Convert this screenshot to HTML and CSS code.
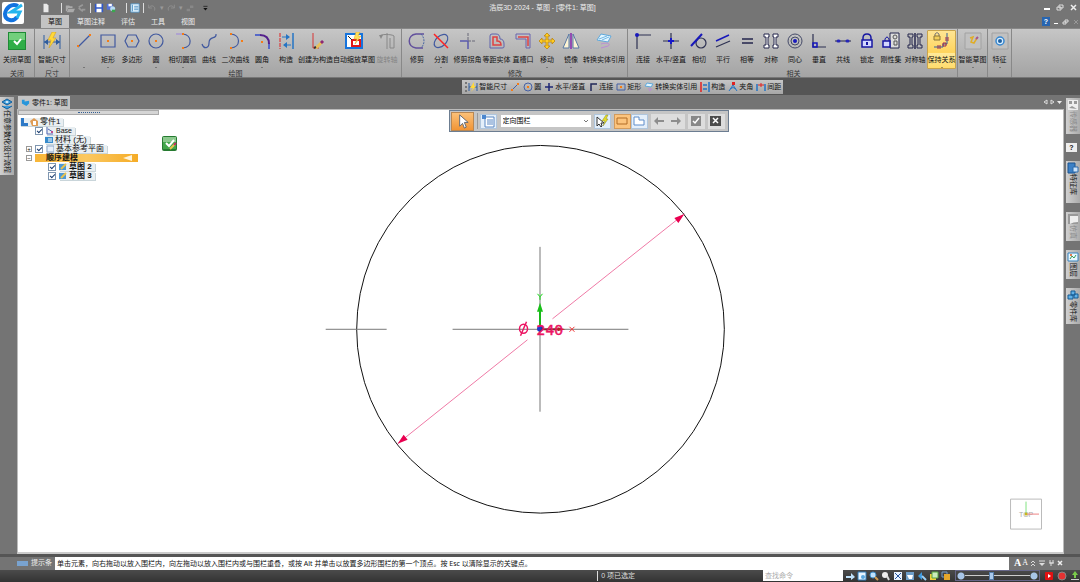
FILE: index.html
```html
<!DOCTYPE html>
<html lang="zh-CN">
<head>
  <meta charset="UTF-8" />
  <meta name="viewport" content="width=device-width, initial-scale=1.0"/>
  <title>浩辰3D 2024 - 草图 - [零件1: 草图]</title>
  <link rel="stylesheet" href="styles.css">
</head>
<body>

  <header class="header">
    <button class="logo" aria-label="应用程序菜单">
      <svg viewBox="0 0 22 22"><path d="M16 4C10 1 4 5 3 12c0 7 9 8 12 3" fill="none" stroke="#1273e0" stroke-width="4"/><path d="M20 3 9 10h9l-3 6" fill="none" stroke="#23b4ee" stroke-width="3"/></svg>
    </button>
    <div class="titlebar">
      <div class="quick">
        <button aria-label="新建"><svg viewBox="0 0 12 12"><path d="M3 1h4l2 2v8H3z" fill="#e8e8e8"/></svg></button>
        <span class="tiny"></span><i class="bar"></i>
        <button aria-label="打开"><svg viewBox="0 0 12 12"><path d="M1 3h4l1 1h3v2H4l-2 4H1zM4 7h8l-2 4H2z" fill="#aaa"/></svg></button>
        <button aria-label="关闭文件"><svg viewBox="0 0 12 12"><path d="M2 5 7 2M2 6l5 4M6 8h4" stroke="#999" stroke-width="2"/></svg></button>
        <i class="bar"></i>
        <button aria-label="保存"><svg viewBox="0 0 12 12"><path d="M1 1h10v10H1z" fill="#3158c8"/><path d="M3 1h6v4H3zM3 7h6v4H3z" fill="#fff"/></svg></button>
        <button aria-label="全部保存"><svg viewBox="0 0 12 12"><path d="M1 1h7v7H1z" fill="#5573d8"/><path d="M3 1h4v3H3z" fill="#fff"/><circle cx="8" cy="7" r="3" fill="#b9dcf5"/><path d="M7 8h4v3H7z" fill="#3aa84e"/></svg></button>
        <span class="tiny"></span><i class="bar"></i>
        <button aria-label="属性"><svg viewBox="0 0 12 12"><path d="M1 1h10v10H1z" fill="#e4f3fc" stroke="#4e91c4"/><path d="M3 2v8M5 4h5M5 6h5M5 8h5" stroke="#4e91c4"/></svg></button>
        <i class="bar"></i>
        <button aria-label="撤销"><svg viewBox="0 0 12 12"><path d="M2 2v4h4M2 6c3-5 9-2 7 3" fill="none" stroke="#929292"/></svg></button>
        <span class="tiny">▾</span>
        <button aria-label="重做"><svg viewBox="0 0 12 12"><path d="M10 2v4H6M10 6C7 1 1 4 3 9" fill="none" stroke="#929292"/></svg></button>
        <span class="tiny">▾</span>
        <button aria-label="重复"><svg viewBox="0 0 12 12"><path d="M2 7h4v3H2zM6 3h4v3H6z" fill="#888"/></svg></button>
        <button aria-label="自定义快速访问" class="more"><svg viewBox="0 0 12 12"><path d="M4 4h5" stroke="#222"/><path d="M4 6h5L6.500 9z" fill="#111"/></svg></button>
      </div>
      <h1 class="caption">浩辰3D 2024 - 草图 - [零件1: 草图]</h1>
      <div class="winbtns">
        <button aria-label="最小化"><svg viewBox="0 0 8 8"><path d="M1 4h6v2H1z"/></svg></button>
        <button aria-label="还原"><svg viewBox="0 0 8 8"><path d="M3 1h4v3H3zM1 3h4v3H1z" fill="#757575" stroke="#ddd"/></svg></button>
        <button aria-label="关闭"><svg viewBox="0 0 8 8"><path d="m2 1 5 5m0-5L2 6" stroke="#eee" stroke-width="1.500"/></svg></button>
      </div>
    </div>
    <nav class="tabs">
      <a href="#" class="tab active">草图</a>
      <a href="#" class="tab">草图注释</a>
      <a href="#" class="tab">评估</a>
      <a href="#" class="tab">工具</a>
      <a href="#" class="tab">视图</a>
      <div class="docbtns">
        <button class="help" aria-label="帮助">?</button>
        <button aria-label="最小化文档"><svg viewBox="0 0 8 8"><path d="M2 5h4v1H2z"/></svg></button>
        <button aria-label="还原文档"><svg viewBox="0 0 8 8"><path d="M3 2h3v2H3zM1 4h3v2H1z" fill="#757575" stroke="#ddd"/></svg></button>
        <button aria-label="关闭文档"><svg viewBox="0 0 8 8"><path d="m2 2 4 4m0-4L2 6" stroke="#999"/></svg></button>
      </div>
    </nav>
  </header>

  <section class="ribbon">
    <div class="group g-one">
      <div class="cmds">
        <button class="cmd w4"><svg viewBox="0 0 18 18"><path d="M0 0h18v18H0z" fill="#1f8a35"/><path d="M1 1h16v16H1z" fill="#2fae47"/><path d="M1 1h16v7H1z" fill="#72cf7c"/><path d="m6 9 3 3 4-5" fill="none" stroke="#fff" stroke-width="2"/></svg><span>关闭草图</span></button>
      </div>
      <div class="gname">关闭</div>
    </div>
    <div class="group g-one">
      <div class="cmds">
        <button class="cmd w4 drop"><svg viewBox="0 0 18 18"><path d="M1 3v14M17 3v14M1 10h16" stroke="#2e5c9e"/><path d="m1 10 4-3v6zM17 10l-4-3v6z" fill="#2e5c9e"/><path d="m9 0-4 8h3l-2 8 7-10h-3l3-6z" fill="#ffd83a" stroke="#cf9b15" stroke-width=".5"/></svg><span>智能尺寸</span></button>
      </div>
      <div class="gname">尺寸</div>
    </div>
    <div class="group">
      <div class="cmds">
        <button class="cmd drop" aria-label="直线"><svg viewBox="0 0 18 18"><path d="M3 15 15 3" class="bl"/><path class="or" d="M2 13h2v2H2zM14 2h2v2h-2z"/></svg><span></span></button>
        <button class="cmd drop"><svg viewBox="0 0 18 18"><path d="M2 3h14v12H2z" class="bl"/><path class="or" d="M8 8h2v2H8z"/></svg><span>矩形</span></button>
        <button class="cmd"><svg viewBox="0 0 18 18"><path d="M5 3h8l3 6-3 6H5L2 9z" class="bl"/><path class="or" d="M8 8h2v2H8z"/></svg><span>多边形</span></button>
        <button class="cmd drop"><svg viewBox="0 0 18 18"><circle cx="9" cy="9" r="7" class="bl"/><path class="or" d="M8 8h2v2H8z"/></svg><span>圆</span></button>
        <button class="cmd w4 drop"><svg viewBox="0 0 18 18"><path d="M2 2h7" stroke="#9b83dc"/><path d="M9 2c9 1 10 13 0 14" class="bl"/><path class="or" d="M8 1h2v2H8zM8 15h2v2H8z"/></svg><span>相切圆弧</span></button>
        <button class="cmd"><svg viewBox="0 0 18 18"><path d="M2 12c2 6 7 4 7-1 0-8 8-3 7-9" class="bl"/></svg><span>曲线</span></button>
        <button class="cmd w4"><svg viewBox="0 0 18 18"><path d="M4 2c10 1 10 13 0 14" class="bl"/><path class="or" d="M3 1h2v2H3zM3 15h2v2H3zM14 8h2v2h-2z"/></svg><span>二次曲线</span></button>
        <button class="cmd drop"><svg viewBox="0 0 18 18"><path d="M2 3h5M16 11v6" stroke="#5669c8" stroke-width="2"/><path d="M7 3q9 0 9 9" fill="none" stroke="#54208c" stroke-width="2"/><path class="or" d="M8 9h2v2H8z"/></svg><span>圆角</span></button>
        <button class="cmd"><svg viewBox="0 0 18 18"><path d="M3 1v16" stroke="#e02222" stroke-dasharray="4 1"/><path d="M16 1v16" stroke="#2474c4" stroke-width="1.500"/><path d="M5 5h4M10 13h4" stroke="#2474c4"/><path d="m9 2 4 3-4 3zM10 10l-4 3 4 3z" fill="#2474c4"/></svg><span>构造</span></button>
        <button class="cmd w5"><svg viewBox="0 0 18 18"><path d="M6 1v15h6" fill="none" stroke="#d83434"/><path d="m8 15 6-6 2 2-6 6H8z" fill="#e8c15a"/><path d="m14 9 2 2" stroke="#8d2775" stroke-width="3"/><path d="m7 16 2-1" stroke="#333" stroke-width="2"/></svg><span>创建为构造</span></button>
        <button class="cmd w6"><svg viewBox="0 0 18 18"><path d="M1 2h16v14H1z" fill="#fff" stroke="#1673dc" stroke-width="2"/><path d="M7 8h8v6H7z" fill="none" stroke="#e21818" stroke-width="2"/><path d="m3 4 4 4" stroke="#222"/><path d="m11 0-2 7h3l-2 5 6-8h-3l2-4z" fill="#ffe05a" stroke="#d8a528" stroke-width=".5"/></svg><span>自动缩放草图</span></button>
        <button class="cmd dim" disabled><svg viewBox="0 0 18 18"><path d="M9 1v16M2 4c0-2 12-2 14 0v12h-4V6" fill="none" stroke="#888"/><path d="M1 3h4L3 7z" fill="#888"/></svg><span>旋转轴</span></button>
      </div>
      <div class="gname">绘图</div>
    </div>
    <div class="group g-edit">
      <div class="cmds">
        <button class="cmd"><svg viewBox="0 0 18 18"><path d="M16 2H8C-1 3-1 15 8 16h7" fill="none" stroke="#62509c" stroke-width="1.500"/><path d="M13 2c4 4 4 10 0 14" fill="none" stroke="#4b68a4" stroke-dasharray="2 1"/></svg><span>修剪</span></button>
        <button class="cmd drop"><svg viewBox="0 0 18 18"><ellipse cx="9" cy="9" rx="5" ry="8" transform="rotate(48 9 9)" class="bl"/><path d="m2 2 14 14" stroke="#f22" stroke-width="1.500"/></svg><span>分割</span></button>
        <button class="cmd w4"><svg viewBox="0 0 18 18"><path d="M1 9h8v8" fill="none" stroke="#5959ad" stroke-width="1.500"/><path d="M9 1v8h8" fill="none" stroke="#686878" stroke-dasharray="3 1"/></svg><span>修剪拐角</span></button>
        <button class="cmd w4"><svg viewBox="0 0 18 18"><path d="M2 4q0-2 2-2h4q4 0 4 5 4 0 4 5v3q0 1-2 1H2z" fill="none" stroke="#5e63ad"/><path d="M5 5h4v4q4 0 4 4H5z" fill="none" stroke="#df4141" stroke-width="1.500"/></svg><span>等距实体</span></button>
        <button class="cmd"><svg viewBox="0 0 18 18"><path d="M2 2h14v14h-4V7H2z" fill="none" stroke="#6965af"/><path d="M4 5h10v9" fill="none" stroke="#df4141" stroke-width="1.500"/></svg><span>直槽口</span></button>
        <button class="cmd drop"><svg viewBox="0 0 18 18"><path d="m9 1 3 3h-2v4h4V6l3 3-3 3v-2h-4v4h2l-3 3-3-3h2v-4H4v2L1 9l3-3v2h4V4H6z" fill="#ffcd22" stroke="#bd8710" stroke-width=".8"/></svg><span>移动</span></button>
        <button class="cmd drop"><svg viewBox="0 0 18 18"><path d="M7 2v14H1zM11 2v14h6z" fill="#fff5d4" stroke="#5979a6"/><path d="M9 1v16" stroke="#954db1" stroke-width="2"/></svg><span>镜像</span></button>
        <button class="cmd w6"><svg viewBox="0 0 18 18"><path d="m6 2 10 2-3 6-11-2z" fill="#e2f5ff" stroke="#5fa8db"/><path d="m4 7 8-3M7 8l7-3" stroke="#72b7e4"/><path d="M6 12c5-2 11 0 7 2l-7 2" fill="none" stroke="#bb8bd4"/></svg><span>转换实体引用</span></button>
      </div>
      <div class="gname">修改</div>
    </div>
    <div class="group related">
      <div class="cmds">
        <button class="cmd"><svg viewBox="0 0 18 18"><path d="M3 17V3h14" class="dk"/><circle cx="3" cy="3" r="2" fill="#1919bd"/></svg><span>连接</span></button>
        <button class="cmd w5"><svg viewBox="0 0 18 18"><path d="M9 1v16M1 9h16" class="dk"/><path d="M9 6v6M6 9h6" stroke="#1717ca" stroke-width="2"/></svg><span>水平/竖直</span></button>
        <button class="cmd"><svg viewBox="0 0 18 18"><circle cx="11" cy="11" r="5" class="dk"/><path d="M1 14 12 2" stroke="#1717ba" stroke-width="2"/></svg><span>相切</span></button>
        <button class="cmd"><svg viewBox="0 0 18 18"><path d="m2 9 13-6" stroke="#1717ba" stroke-width="1.500"/><path d="m2 15 14-6" class="dk"/></svg><span>平行</span></button>
        <button class="cmd"><svg viewBox="0 0 18 18"><path d="M4 7h11M4 11h11" stroke="#24264d" stroke-width="1.500"/></svg><span>相等</span></button>
        <button class="cmd"><svg viewBox="0 0 18 18"><path d="M2 2h5v3H6v8h1v3H2v-3h2V5H2zM16 2h-5v3h1v8h-1v3h5v-3h-2V5h2z" fill="#fff" stroke="#24264d"/></svg><span>对称</span></button>
        <button class="cmd"><svg viewBox="0 0 18 18"><circle cx="9" cy="9" r="7" fill="none" stroke="#444a68"/><circle cx="9" cy="9" r="4" fill="none" stroke="#444a68"/><circle cx="9" cy="9" r="2" fill="#1919bd"/></svg><span>同心</span></button>
        <button class="cmd"><svg viewBox="0 0 18 18"><path d="M3 2v13h13" class="dk"/><path d="M3 11h4v4H3z" fill="none" stroke="#1717ba" stroke-width="1.500"/></svg><span>垂直</span></button>
        <button class="cmd"><svg viewBox="0 0 18 18"><path d="M1 9h16" stroke="#24264d"/><path d="M4 9h1M13 9h1" stroke="#2626b8" stroke-width="3" stroke-linecap="round"/></svg><span>共线</span></button>
        <button class="cmd"><svg viewBox="0 0 18 18"><path d="M5 8V6q0-4 4-4t4 4v2" fill="none" stroke="#1717a2" stroke-width="1.500"/><path d="M4 8h10v7H4z" fill="#d4d8ff" stroke="#1717a2" stroke-width="1.500"/><path d="M9 10v3" stroke="#1717a2" stroke-width="2"/></svg><span>锁定</span></button>
        <button class="cmd"><svg viewBox="0 0 18 18"><path d="M8 1h9v15H8z" fill="#ddd" stroke="#24264d"/><circle cx="13" cy="5" r="2" fill="none" stroke="#555"/><path d="M12 9h3v4h-3z" fill="none" stroke="#555"/><path d="M3 9V7q2-4 4 0v2" fill="none" stroke="#1717a2"/><path d="M1 9h7v6H1z" fill="#d4d8ff" stroke="#1717a2" stroke-width="1.500"/></svg><span>刚性集</span></button>
        <button class="cmd"><svg viewBox="0 0 18 18"><path d="M2 2h5v3H6v8h1v3H2v-3h2V5H2zM16 2h-5v3h1v8h-1v3h5v-3h-2V5h2z" fill="#bbb" stroke="#24264d"/><path d="M9 1v16" stroke="#24264d" stroke-width="1.500"/></svg><span>对称轴</span></button>
        <button class="cmd w4 drop on"><svg viewBox="0 0 18 18"><path d="M2 5V2q2-3 4 0v3" fill="none" stroke="#777"/><path d="M1 4h6v4H1z" fill="#f3cf5a" stroke="#8b7638"/><path d="M1 15h9v-3h4V1" fill="none" stroke="#31609d"/><path d="M5 13v4M7 13v4M12 6h4M12 8h4" stroke="#9c2850"/><path d="M10 11h3v3h-3z" fill="none" stroke="#9c2850"/></svg><span>保持关系</span></button>
      </div>
      <div class="gname">相关</div>
    </div>
    <div class="group g-box">
      <div class="cmds">
        <button class="cmd w4 drop"><svg viewBox="0 0 18 18"><path d="M1 1h16v16H1z" fill="#c1c1c1" stroke="#a2a2a2"/><path d="m6 6 3-1-2 5 3 1 3-5" fill="none" stroke="#e0ad26" stroke-width="1.500"/><path d="m12 7 2-2" stroke="#a6568c" stroke-width="2"/></svg><span>智能草图</span></button>
      </div>
    </div>
    <div class="group g-box g-feature">
      <div class="cmds">
        <button class="cmd drop"><svg viewBox="0 0 18 18"><path d="M1 1h16v16H1z" fill="#c1c1c1" stroke="#a2a2a2"/><circle cx="9" cy="9" r="4" fill="#d9efff" stroke="#3787cf" stroke-width="1.500"/><circle cx="9" cy="9" r="2" fill="#2161a2"/></svg><span>特征</span></button>
      </div>
    </div>
  </section>

  <div class="band">
    <div class="toolstrip">
      <i class="grip"></i>
      <button><svg viewBox="0 0 10 10"><path d="M1 1v8M9 1v8M1 5h8" stroke="#2e5c9e"/><path d="m6 0-4 6h3L3 10l5-6H6z" fill="#ffd83a"/></svg>智能尺寸</button>
      <button aria-label="直线"><svg viewBox="0 0 10 10"><path d="m2 8 6-6" stroke="#4560a5"/><path class="or" d="M1 7h2v2H1zM7 1h2v2H7z"/></svg></button>
      <button><svg viewBox="0 0 10 10"><circle cx="5" cy="5" r="4" fill="none" stroke="#4560a5"/><path class="or" d="M4 4h2v2H4z"/></svg>圆</button>
      <button><svg viewBox="0 0 10 10"><path d="M5 1v8M1 5h8" stroke="#1e2775" stroke-width="1.500"/></svg>水平/竖直</button>
      <button><svg viewBox="0 0 10 10"><path d="M3 9V2h6" fill="none" stroke="#222959" stroke-width="1.500"/></svg>连接</button>
      <button><svg viewBox="0 0 10 10"><path d="M1 2h8v6H1z" fill="none" stroke="#4560a5"/><path class="or" d="M4 4h2v2H4z"/></svg>矩形</button>
      <button><svg viewBox="0 0 10 10"><path d="m3 1 6 1-2 3-6-1z" fill="#e2f5ff" stroke="#5fa8db"/><path d="M4 7q7-1 1 2" fill="none" stroke="#bb8bd4"/></svg>转换实体引用</button>
      <button><svg viewBox="0 0 10 10"><path d="M1 0v10" stroke="#e02222" stroke-width="1.500"/><path d="M9 0v10M3 3h4M3 7h4" stroke="#2474c4" stroke-width="1.500"/></svg>构造</button>
      <button><svg viewBox="0 0 10 10"><path d="M5 3 1 9M5 3l4 6M2 7q3-3 6 0" fill="none" stroke="#2474c4"/><path d="M4 0h3v3H4z" fill="#e02222"/></svg>夹角</button>
      <button><svg viewBox="0 0 10 10"><path d="M1 2v7M9 2v7" stroke="#2474c4" stroke-width="1.500"/><path d="M2 3h6M5 1v4" stroke="#e02222"/></svg>间距</button>
    </div>
  </div>

  <main class="main">
    <aside class="dock left">
      <button class="side"><svg viewBox="0 0 12 12"><path d="M1 4 6 1l5 3-5 3zM1 8l5 3 5-3" fill="#3b9ad8" stroke="#0f5f9f"/><path d="m4 4 2-1 2 1-2 1z" fill="#fff"/></svg><span>任意参数化设计流程</span></button>
    </aside>

    <div class="work">
      <div class="doctabs">
        <a href="#" class="doctab"><svg viewBox="0 0 10 10"><path d="M1 2h3v2l5-1v3L6 9 1 6z" fill="#2796db"/></svg>零件1: 草图</a>
        <div class="nav">
          <button aria-label="上一个"><svg viewBox="0 0 7 8"><path d="M5 2v4L2 4z" fill="none" stroke="#ddd"/></svg></button>
          <button aria-label="下一个"><svg viewBox="0 0 7 8"><path d="M2 2v4l3-2z" fill="none" stroke="#ddd"/></svg></button>
          <button aria-label="文档列表"><svg viewBox="0 0 7 8"><path d="M1 3h5L3.500 6z" fill="#eee"/></svg></button>
        </div>
      </div>
      <div class="view">
        <svg class="drawing" viewBox="17 110 1046 442" role="img" aria-label="直径 240 的圆">
          <circle cx="540" cy="329.500" r="184" fill="none" stroke="#111"/>
          <path d="M325 329.500h61M452 329.500h176M539.500 247v165" stroke="#777" fill="none"/>
          <path d="M684 214 552 319M527 340 397 444" stroke="#ef79a6" fill="none"/>
          <path d="m684 214-10 4 4 5zM397 444l10-4-4-5z" fill="#e90050"/>
          <path d="M539.500 328v-17" stroke="#18b818" stroke-width="2"/><path d="m539.500 303-3 9h6z" fill="#18c018"/>
          <path d="m537 294 2.500 3 2.500-3M539.500 297v3" stroke="#1d1" fill="none"/>
          <path d="M541 329.500h17" stroke="#7b3232" stroke-width="2"/><path d="m565 329.500-8-2v4z" fill="#b02525"/>
          <path d="m569 327 5 5m0-5-5 5" stroke="#e33"/>
          <circle cx="539.500" cy="329" r="3" fill="#2038c8"/>
          <ellipse cx="523" cy="329" rx="4" ry="4.500" class="phi"/><path d="m520 336 6-14" class="phi"/>
          <text x="536" y="335" class="dim-text">240</text>
          <g class="cube">
            <path d="M1010.500 499.500h31v30h-31z" fill="#fff" stroke="#bbb"/>
            <text x="1019" y="517">TOP</text>
            <path d="M1026 514v-12" stroke="#83e383"/><path d="M1026 514.500h13" stroke="#ee8585"/><circle cx="1026" cy="514.500" r="1.500" fill="#c8b51e"/>
          </g>
        </svg>

        <div class="tree">
          <div class="treebar"><i></i></div>
          <ul>
            <li class="l0"><span class="node"><svg viewBox="0 0 8 8"><path d="M1 0h3v5h4v3H1z" fill="#2d79c7"/></svg><svg viewBox="0 0 8 8"><path d="m0 3 4-3 4 3v5H2z" fill="#df9c55"/><path d="M3 3h3v4H3z" fill="#fff"/></svg>零件1</span></li>
            <li class="l1"><input type="checkbox" id="c1" checked><label class="node" for="c1"><svg viewBox="0 0 8 8"><path d="M1 0v7h6M2 2l5 3" stroke="#5266b4" fill="none"/><path d="M5 4h2v2H5z" fill="#be4f91"/></svg><span class="latin">Base</span></label></li>
            <li class="l2"><span class="node"><svg viewBox="0 0 8 8"><path d="M0 1h8v6H0z" fill="#368bcc"/><path d="M3 3h4M3 5h4" stroke="#fff"/></svg>材料 (无)</span></li>
            <li class="l1 has"><button class="exp" aria-label="展开">+</button><input type="checkbox" id="c2" checked><label class="node" for="c2"><svg viewBox="0 0 8 8"><path d="M1 1h7v6H1z" fill="#e7f0fb" stroke="#8da6c8"/></svg>基本参考平面</label></li>
            <li class="l1 has"><button class="exp" aria-label="折叠">−</button><span class="node hot">顺序建模<i></i></span></li>
            <li class="l3"><input type="checkbox" id="c3" checked><label class="node b" for="c3"><svg viewBox="0 0 8 8"><path d="M0 1h7v6H0z" fill="#4c99d7"/><path d="m2 6 5-5" stroke="#e7c250" stroke-width="2"/></svg>草图 2</label></li>
            <li class="l3"><input type="checkbox" id="c4" checked><label class="node b" for="c4"><svg viewBox="0 0 8 8"><path d="M0 1h7v6H0z" fill="#4c99d7"/><path d="m2 6 5-5" stroke="#e7c250" stroke-width="2"/></svg>草图 3</label></li>
          </ul>
        </div>

        <button class="finish" aria-label="关闭草图"><svg viewBox="0 0 15 15"><rect width="15" height="15" rx="2" fill="#267b31"/><path d="M1 1h13v12H1z" fill="#42a64b"/><path d="M1 1h13v5H1z" fill="#8cc98e"/><path d="m4 7 3 3 5-6" fill="none" stroke="#fff" stroke-width="2"/><path d="m8 13 5-5" stroke="#e6c54d" stroke-width="2"/><path d="m12 9 2-2" stroke="#c02b67" stroke-width="2"/></svg></button>

        <div class="cmdbar">
          <button class="pick" aria-label="选择"><svg viewBox="0 0 18 18"><path d="M6 2v12l3-3 2 5 2-1-2-5h4z" fill="#fff" stroke="#5d6673"/></svg></button>
          <i></i>
          <button class="blue" aria-label="选项"><svg viewBox="0 0 14 14"><path d="M4 3h9v10H4z" fill="#fff" stroke="#5b88c4"/><path d="M1 1h4v4H1z" fill="#4b87cf"/><path d="M6 6h6M6 8h6M6 10h6" stroke="#5b88c4"/></svg></button>
          <select aria-label="围栏类型"><option>定向围栏</option></select>
          <button class="blue" aria-label="快速选取"><svg viewBox="0 0 14 14"><path d="M2 3v9l2-2 2 3 1-1-1-3h3z" fill="#fff" stroke="#333"/><path d="m11 1-4 6h3l-2 5 5-7h-2l2-4z" fill="#e5dd29" stroke="#8c8b24" stroke-width=".5"/></svg></button>
          <div class="pair">
            <button class="orange" aria-label="矩形围栏"><svg viewBox="0 0 14 14"><path d="M2 4h10v6H2z" fill="none" stroke="#b26d27"/></svg></button>
            <button class="blue" aria-label="多边形围栏"><svg viewBox="0 0 14 14"><path d="M2 3h5v3h5v5H2z" fill="#fff" stroke="#5f8dca"/></svg></button>
          </div>
          <div class="pair">
            <button class="gray" aria-label="后退"><svg viewBox="0 0 14 14"><path d="m2 7 4-4v3h6v2H6v3z" fill="#8d8d8d"/></svg></button>
            <button class="gray" aria-label="前进"><svg viewBox="0 0 14 14"><path d="M12 7 8 3v3H2v2h6v3z" fill="#8d8d8d"/></svg></button>
          </div>
          <button class="gray" aria-label="接受"><svg viewBox="0 0 14 14"><path d="M2 2h10v10H2z" fill="#888"/><path d="m4 7 2 2 4-5" fill="none" stroke="#fff" stroke-width="1.500"/></svg></button>
          <button class="gray" aria-label="取消"><svg viewBox="0 0 14 14"><path d="M1 2h11v10H1z" fill="#4c4c4c"/><path d="m4 4 5 5m0-5-5 5" stroke="#fff" stroke-width="1.500"/></svg></button>
        </div>
      </div>
    </div>

    <aside class="dock right">
      <button class="side off"><svg viewBox="0 0 12 12"><path d="M1 1h10v10H1z" fill="#eee"/><path d="M2 2h3v3H2zM7 2h3v3H7zM2 9l3-2 5 3" fill="#999"/></svg><span>传感器</span></button>
      <button class="side q" aria-label="帮助">?</button>
      <button class="side tall"><svg viewBox="0 0 12 12"><path d="M1 1h7v10H1z" fill="#3b80c6" stroke="#1d5590"/><path d="M6 5h5v5H6z" fill="#cae2fa" stroke="#2d6bab"/></svg><span>特征库</span></button>
      <button class="side off"><svg viewBox="0 0 12 12"><path d="M1 1h10v10H1z" fill="#999"/><path d="M3 3h8v6q-5 0-8 2z" fill="#eee"/></svg><span>仿真</span></button>
      <button class="side"><svg viewBox="0 0 12 12"><path d="M1 2h10v8H1z" fill="#eaf8ff" stroke="#3682be"/><path d="m3 8 2-3 2 2 2-3" stroke="#3a9b58" fill="none"/><path d="M3 3h2v2H3z" fill="#e57e4e"/></svg><span>图层</span></button>
      <button class="side"><svg viewBox="0 0 12 12"><path d="M1 6h5v4H1zM4 2h4v4H4zM7 5h4v4H7z" fill="#5fb0e6" stroke="#155b94"/></svg><span>零件库</span></button>
    </aside>
  </main>

  <div class="prompt">
    <div class="plabel"><i></i>提示条</div>
    <p class="ptext">单击元素，向右拖动以放入围栏内，向左拖动以放入围栏内或与围栏重叠，或按 Alt 并单击以放置多边形围栏的第一个顶点。按 Esc 以清除显示的关键点。</p>
    <div class="ptools">
      <button class="big" aria-label="增大字体">A</button><button class="small" aria-label="减小字体">A</button>
      <button aria-label="折叠"><svg viewBox="0 0 8 8"><path d="m2 4 2-2 2 2M2 7l2-2 2 2" fill="none" stroke="#ddd"/></svg></button>
      <button aria-label="选项"><svg viewBox="0 0 8 8"><path d="M1 2h6" stroke="#ddd"/><path d="M1 4h6L4 7z" fill="#ddd"/></svg></button>
      <button aria-label="固定"><svg viewBox="0 0 8 8"><path d="M3 1v3h3V1M2 4h5M4 4v3" fill="none" stroke="#ddd"/></svg></button>
      <button aria-label="关闭"><svg viewBox="0 0 8 8"><path d="m2 2 4 4m0-4L2 6" stroke="#eee" stroke-width="1.500"/></svg></button>
    </div>
  </div>

  <footer class="status">
    <span class="count">0 项已选定</span>
    <input class="search" type="text" placeholder="查找命令" aria-label="查找命令">
    <div class="views">
      <button aria-label="执行"><svg viewBox="0 0 10 10"><path d="M1 7V5h5V2l4 4-4 3V7z" fill="#bfe1fa"/></svg></button>
      <button aria-label="区域缩放"><svg viewBox="0 0 10 10"><path d="M1 1h8v8H1z" fill="#e8f5ff" stroke="#2e78b5"/><circle cx="6" cy="6" r="2" fill="#59a7df"/></svg></button>
      <button aria-label="缩放"><svg viewBox="0 0 10 10"><circle cx="4" cy="4" r="3" fill="#bfe1fa" stroke="#3e8dc7"/><path d="m6 6 3 3" stroke="#d29a4d" stroke-width="2"/></svg></button>
      <button aria-label="动态缩放"><svg viewBox="0 0 10 10"><circle cx="4" cy="4" r="3" fill="#eee"/><path d="m6 5 2 4" stroke="#ddd" stroke-width="2"/></svg></button>
      <button aria-label="适合"><svg viewBox="0 0 10 10"><path d="M1 1h8v8H1z" fill="#eaf3ff"/><path d="m2 2 6 6m0-6L2 8" stroke="#2656a1"/></svg></button>
      <button aria-label="平移"><svg viewBox="0 0 10 10"><path d="M1 1h8v8H1z" fill="#6e9ec9"/><path d="M2 4h6l-1 4H4z" fill="#fff"/></svg></button>
      <button aria-label="旋转"><svg viewBox="0 0 10 10"><path d="m1 5 4-4v8z" fill="#3e9be0"/><path d="m5 5 4 4" stroke="#9bd0f5" stroke-width="2"/></svg></button>
      <button aria-label="视图方向"><svg viewBox="0 0 10 10"><path d="M1 3h6v6H1z" fill="#f1cf3d"/><path d="M3 1h6v6H3z" fill="#cbebbd" stroke="#56a33e"/></svg></button>
      <button aria-label="视图样式"><svg viewBox="0 0 10 10"><path d="M1 1h5v5H1z" fill="none" stroke="#729bc9"/><path d="M3 3h6v6H3z" fill="#e5a62b"/></svg></button>
    </div>
    <input class="zoom" type="range" min="0" max="100" value="42" aria-label="缩放比例">
    <button class="rec" aria-label="视频"><svg viewBox="0 0 10 10"><rect x="1" y="1" width="8" height="8" rx="1" fill="#e21111"/><path d="m4 3 3 2-3 2z" fill="#fff"/></svg></button>
    <button class="rec" aria-label="录制"><svg viewBox="0 0 10 10"><circle cx="5" cy="5" r="4" fill="#e43232" stroke="#888"/></svg></button>
    <button class="rec" aria-label="上传"><svg viewBox="0 0 10 10"><path d="m5 0 3 4H6v3H4V4H2z" fill="#7acb4a"/><path d="M1 8h8v1H1z" fill="#ccc"/></svg></button>
  </footer>

</body>
</html>
```
FILE: styles.css
```css
* {
  box-sizing: border-box;
}

body {
  margin: 0;
  min-height: 100vh;
  display: flex;
  flex-direction: column;
  background-color: #747474;
  font-family: "Liberation Sans", "Noto Sans CJK SC", sans-serif;
  font-size: 7px;
  line-height: 10px;
  color: #111;
}

button {
  font: inherit;
  color: inherit;
  background: none;
  border: none;
  padding: 0;
  margin: 0;
  cursor: pointer;
}

a {
  color: inherit;
  text-decoration: none;
}

svg {
  display: block;
  flex: none;
}

/* icon strokes */
.bl { fill: none; stroke: #41599f; stroke-width: 1.2; }
.dk { fill: none; stroke: #2d3152; stroke-width: 1.2; }
.or { fill: #f57c16; }

/* header */
.header {
  display: grid;
  grid-template-columns: 41px 1fr;
  grid-template-rows: 15px 13px;
  background-color: #757575;
  color: #eee;
}

.logo {
  grid-column: 1;
  grid-row: 1 / 3;
  width: 22px;
  height: 22px;
  margin: 2px;
  background-color: #fff;
  border-radius: 2px;
  z-index: 1;
}

.titlebar {
  grid-column: 1 / 3;
  grid-row: 1;
  display: grid;
  grid-template-columns: 1fr auto 1fr;
  align-items: center;
}

.quick {
  display: flex;
  align-items: center;
  padding-left: 40px;
}

.quick svg {
  width: 10px;
  height: 10px;
}

.quick button {
  margin: 0 1px;
}

.quick .bar {
  width: 1px;
  height: 10px;
  margin: 0 2px;
  background-color: #ddd;
}

.tiny {
  width: 7px;
  color: #999;
  text-align: center;
}

.quick .more {
  margin-left: 4px;
}

.caption {
  margin: 0;
  padding-left: 5px;
  font-size: 7px;
  font-weight: normal;
}

.winbtns,
.docbtns {
  display: flex;
  justify-content: flex-end;
  align-items: center;
  gap: 5px;
  padding-right: 3px;
}

.winbtns svg,
.docbtns svg {
  width: 8px;
  height: 8px;
  fill: #fff;
}

.docbtns {
  margin-left: auto;
  gap: 2px;
  padding-right: 0;
}

.help {
  width: 8px;
  height: 9px;
  background-color: #2765b0;
  color: #fff;
  font-weight: bold;
}

.tabs {
  grid-column: 2;
  grid-row: 2;
  display: flex;
}

.tab {
  padding: 2px 8px 1px;
}

.tab.active {
  padding: 2px 7px 1px;
  background-color: #c3c3c3;
  color: #111;
}

/* ribbon */
.ribbon {
  display: flex;
  height: 50px;
  background: linear-gradient(#c6c6c6, #b4b4b4 50%, #a4a4a4);
  border-top: 1px solid #888;
  border-bottom: 1px solid #777;
}

.group {
  display: flex;
  flex-direction: column;
  padding: 1px 2px 0;
  border-right: 1px solid #888;
}

.cmds {
  display: flex;
}

.cmd {
  display: flex;
  flex-direction: column;
  align-items: center;
  width: 24px;
  height: 39px;
  padding-top: 2px;
  white-space: nowrap;
}

.cmd svg {
  width: 18px;
  height: 18px;
}

.cmd span {
  height: 10px;
  margin-top: 5px;
}

.cmd.w4 { width: 29px; }
.cmd.w5 { width: 35px; }
.cmd.w6 { width: 42px; }
.related .w5 { width: 32px; }

.cmd.drop::after {
  content: "";
  margin-top: 2px;
  border: 1px solid transparent;
  border-top-color: #444;
}

.cmd.dim {
  color: #858585;
}

.cmd.on {
  background: linear-gradient(#ffe593, #ffd45c 58%, #ffe99a 60%, #ffdc6c);
  border: 1px solid #c9a44c;
  border-radius: 1px;
  padding-top: 1px;
}

.gname {
  text-align: center;
  line-height: 9px;
  color: #333;
}

.g-one .cmd.w4 { width: 30px; }
.g-edit,
.related { padding-left: 3px; }
.related { padding-right: 1px; }
.g-box { padding: 1px 0 0; }
.g-feature .cmd { width: 23px; }

/* floating tool strip */
.band {
  display: flex;
  height: 17px;
  padding: 2px 0 1px;
  background-color: #555;
}

.toolstrip {
  display: flex;
  align-items: center;
  gap: 3px;
  margin-left: 42.8%;
  padding: 0 2px 0 3px;
  background: linear-gradient(#c6c6c6, #a6a6a6);
  white-space: nowrap;
}

.toolstrip button {
  display: flex;
  align-items: center;
  gap: 1px;
}

.toolstrip svg {
  width: 10px;
  height: 10px;
}

.grip {
  width: 2px;
  height: 10px;
  margin-right: -2px;
  border-left: 2px dotted #777;
}

/* work area */
.main {
  flex: 1;
  display: flex;
  min-height: 0;
}

.dock {
  display: flex;
  flex-direction: column;
  padding-top: 2px;
}

.dock.left { width: 17px; }

.dock.right {
  width: 16px;
  padding-top: 3px;
  padding-left: 2px;
}

.side {
  display: flex;
  flex-direction: column;
  align-items: center;
  width: 14px;
  padding: 1px 0 2px;
  background: linear-gradient(90deg, #d0d0d0, #ababab);
}

.side svg {
  width: 12px;
  height: 12px;
}

.side span {
  writing-mode: vertical-rl;
  text-orientation: sideways;
  white-space: nowrap;
}

.right .side { margin-bottom: 9px; }
.right .side.tall { padding-bottom: 8px; }
.side.off span { color: #888; }

.right .side.q {
  width: 11px;
  height: 9px;
  padding: 0;
  background: #eee;
  font-weight: bold;
  line-height: 9px;
}

.work {
  flex: 1;
  display: flex;
  flex-direction: column;
  min-width: 0;
}

.doctabs {
  display: flex;
  justify-content: space-between;
  height: 14px;
}

.doctab {
  display: flex;
  align-items: center;
  gap: 2px;
  margin: 1px 0 0 1px;
  padding: 0 2px 0 3px;
  background-color: #c4c4c4;
}

.doctab svg {
  width: 9px;
  height: 9px;
}

.nav {
  display: flex;
  align-items: center;
  padding-right: 1px;
}

.nav svg {
  width: 7px;
  height: 8px;
}

.view {
  flex: 1;
  position: relative;
  min-height: 0;
  background-color: #fff;
  border: 1px solid #bbb;
  border-bottom: 2px solid #ccc;
}

.drawing {
  width: 100%;
  height: 100%;
}

.phi {
  fill: none;
  stroke: #ec1462;
  stroke-width: 1.5;
}

.dim-text {
  font-family: "DejaVu Sans", sans-serif;
  font-size: 14px;
  fill: #ec1462;
  stroke: #ec1462;
  stroke-width: 0.5;
}

.cube text {
  font-size: 7px;
  fill: #aaa;
}

/* feature tree over the view */
.tree {
  position: absolute;
  top: 0;
  left: 0;
  width: 141px;
  font-size: 8px;
}

.treebar {
  display: flex;
  justify-content: center;
  align-items: center;
  height: 5px;
  background-color: #d5d5d5;
  border: 1px solid #aaa;
}

.treebar i {
  width: 22px;
  border-top: 1px dotted #345f94;
}

.tree ul {
  list-style: none;
  margin: 2px 0 0;
  padding: 0;
}

.tree li {
  display: flex;
  align-items: center;
  gap: 3px;
  height: 9px;
}

.tree .l0 { padding-left: 2px; }
.tree .l1 { padding-left: 17px; }
.tree .l2 { padding-left: 27px; }
.tree .l3 { padding-left: 30px; }
.tree .has { padding-left: 8px; }

.tree input {
  appearance: none;
  width: 8px;
  height: 8px;
  margin: 0;
  border: 1px solid #7f96b0;
  background-color: #fff;
}

.tree input:checked::before {
  content: "";
  display: block;
  width: 4px;
  height: 2px;
  margin: 1px;
  border-left: 1px solid #1b3d70;
  border-bottom: 1px solid #1b3d70;
  transform: rotate(-45deg);
}

.exp {
  width: 6px;
  height: 6px;
  border: 1px solid #999;
  font-size: 6px;
  line-height: 4px;
}

.node {
  display: flex;
  align-items: center;
  gap: 2px;
  height: 8px;
  padding-right: 3px;
  line-height: 8px;
  background-color: #e9eff2;
  box-shadow: 1px 1px 0 #c9d5da;
  white-space: nowrap;
}

.node svg {
  width: 8px;
  height: 8px;
}

.latin { font-size: 7px; }

.node.b { font-weight: bold; }

.node.hot {
  width: 103px;
  padding: 0 6px 0 11px;
  justify-content: space-between;
  font-weight: bold;
  background: linear-gradient(90deg, #f8b637, #fbc860, #f5ac27);
  box-shadow: none;
}

.hot i {
  border: 3px solid transparent;
  border-right: 9px solid #fff4d9;
  border-left: 0;
}

.finish {
  position: absolute;
  top: 26px;
  left: 144px;
}

.finish svg {
  width: 15px;
  height: 15px;
}

/* command bar over the view */
.cmdbar {
  position: absolute;
  top: 0;
  left: 50%;
  margin-left: -92px;
  display: flex;
  align-items: center;
  gap: 3px;
  height: 22px;
  padding: 0 3px 0 1px;
  background-color: #c5c5c5;
  border: 1px solid #6c7d91;
}

.cmdbar button {
  display: flex;
  align-items: center;
  justify-content: center;
  width: 17px;
  height: 15px;
}

.cmdbar svg {
  width: 14px;
  height: 14px;
}

.cmdbar .pick {
  width: 23px;
  height: 19px;
  background: linear-gradient(#fbc078, #f29535);
  border: 1px solid #b98752;
}

.cmdbar .pick svg {
  width: 17px;
  height: 17px;
}

.cmdbar .blue {
  background-color: #e4effa;
  border: 1px solid #b0c6dd;
}

.cmdbar .orange {
  background-color: #fcc47e;
  border: 1px solid #d39b5d;
}

.cmdbar .gray {
  background-color: #ddd;
}

.cmdbar i {
  width: 1px;
  height: 16px;
  margin-right: -1px;
  background-color: #999;
}

.cmdbar select {
  appearance: none;
  width: 90px;
  height: 12px;
  margin-left: 1px;
  padding: 0 2px;
  border: none;
  border-radius: 0;
  background: #fff url("data:image/svg+xml,%3Csvg xmlns='http://www.w3.org/2000/svg' width='6' height='4'%3E%3Cpath d='M1 1l2 2 2-2' fill='none' stroke='%23777'/%3E%3C/svg%3E") no-repeat right 2px center;
  font: inherit;
}

.pair {
  display: flex;
}

/* prompt bar */
.prompt {
  display: flex;
  height: 16px;
  padding: 0 72px 0 17px;
  border-top: 3px solid #555;
}

.plabel {
  display: flex;
  align-items: center;
  gap: 3px;
  width: 38px;
  color: #eee;
}

.plabel i {
  width: 11px;
  height: 5px;
  background-color: #79a3d0;
}

.ptext {
  flex: 1;
  margin: 0;
  padding-left: 2px;
  background-color: #fff;
  font-family: "Noto Sans", "Noto Sans CJK SC", sans-serif;
  line-height: 13px;
  white-space: nowrap;
}

.ptools {
  display: flex;
  align-items: center;
  gap: 1px;
  margin-right: -56px;
  padding-left: 5px;
  color: #fff;
  font-family: "Liberation Serif", serif;
}

.ptools svg {
  width: 8px;
  height: 8px;
}

.big {
  font-size: 10px;
  font-weight: bold;
}

.small { font-size: 8px; }

/* status bar */
.status {
  display: flex;
  align-items: center;
  height: 13px;
  background: linear-gradient(#4b4b4b, #333);
  border-bottom: 1px solid #999;
  color: #ddd;
}

.count {
  flex: 1;
  margin-left: 55.3%;
  padding-left: 3px;
  border-left: 1px solid #ddd;
}

.search {
  width: 80px;
  height: 11px;
  padding: 0 2px;
  border: none;
  background-color: #fff;
  font: inherit;
}

.search::placeholder { color: #aaa; }

.views {
  display: flex;
  gap: 2px;
  padding: 0 4px 0 2px;
}

.views svg,
.rec svg {
  width: 10px;
  height: 10px;
}

.zoom {
  appearance: none;
  width: 85px;
  height: 11px;
  margin: 0 1px 0 0;
  border: 1px solid #668;
  background: radial-gradient(circle at 5px 5px, #a8c5e8 3px, transparent 4px), radial-gradient(circle at 78px 5px, #a8c5e8 3px, transparent 4px), linear-gradient(#ccc, #ccc) center / 65px 1px no-repeat;
}

.zoom::-webkit-slider-thumb {
  appearance: none;
  width: 5px;
  height: 8px;
  background-color: #a9c9ec;
  border: 1px solid #557ca8;
}

.rec { margin-left: 3px; }
```
